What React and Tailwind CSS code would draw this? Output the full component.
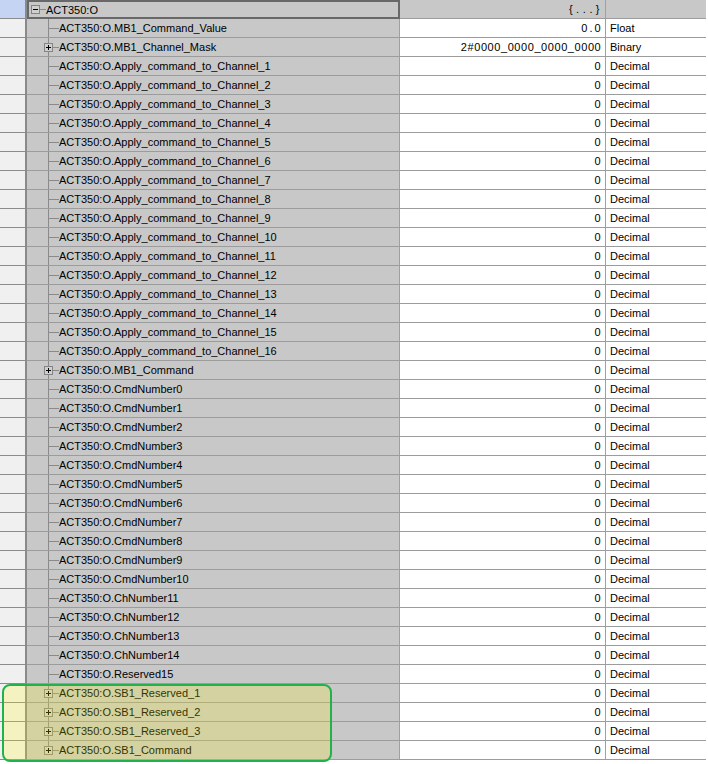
import React from "react";

const base = "ACT350:O.";

const rows = [
  { name: "MB1_Command_Value", value: "0.0", type: "Float" },
  { name: "MB1_Channel_Mask", value: "2#0000_0000_0000_0000", type: "Binary", plus: true },
  ...Array.from({ length: 16 }, (_, i) => ({ name: `Apply_command_to_Channel_${i + 1}` })),
  { name: "MB1_Command", plus: true },
  ...Array.from({ length: 11 }, (_, i) => ({ name: `CmdNumber${i}` })),
  ...Array.from({ length: 4 }, (_, i) => ({ name: `ChNumber${i + 11}` })),
  { name: "Reserved15" },
  { name: "SB1_Reserved_1", plus: true },
  { name: "SB1_Reserved_2", plus: true },
  { name: "SB1_Reserved_3", plus: true },
  { name: "SB1_Command", plus: true },
];

const sans = { fontFamily: '"Liberation Sans", Arial, sans-serif' };

function TreeBox({ minus }) {
  return (
    <div className="relative w-[9px] h-[9px] border border-[#848484] bg-[#cfcfcf] shrink-0">
      <div className="absolute left-[1px] top-[3px] w-[5px] h-px bg-black" />
      {!minus && <div className="absolute left-[3px] top-[1px] w-px h-[5px] bg-black" />}
    </div>
  );
}

// fixed-pitch value text, sans glyphs
function Value({ text }) {
  return (
    <div className="flex" style={sans}>
      {text.split("").map((c, i) => (
        <span key={i} className="w-[6.7px] text-center">
          {c}
        </span>
      ))}
    </div>
  );
}

function Row({ row, last }) {
  return (
    <div className="flex h-[19px]">
      <div className="w-[27px] shrink-0 bg-[#f0f0f0] border-r-2 border-b border-r-[#8a8a8a] border-b-[#8c8c8c]" />
      <div className="w-[373px] shrink-0 bg-[#c8c8c8] border-b border-[#9c9c9c] border-r border-r-[#a0a0a0] flex pl-[21px]">
        <div className="relative w-[11px] shrink-0 flex flex-col">
          <div className="h-[10px] border-l border-b border-[#8a8a8a]" />
          <div className={`flex-1 ${last ? "" : "border-l border-[#8a8a8a]"}`} />
          {row.plus && (
            <div className="absolute left-[-4px] top-[5px]">
              <TreeBox />
            </div>
          )}
        </div>
        <div
          className="flex items-center pt-px text-[11px] text-black whitespace-nowrap"
          style={sans}
        >
          {base + row.name}
        </div>
      </div>
      <div className="w-[206px] shrink-0 bg-white border-b border-[#9c9c9c] border-r border-r-[#a0a0a0] flex items-center justify-end pr-[4px] pt-px text-[11px] text-black">
        <Value text={row.value || "0"} />
      </div>
      <div
        className="w-[100px] shrink-0 bg-white border-b border-[#9c9c9c] flex items-center pl-[4px] pt-px text-[11px] text-black"
        style={sans}
      >
        {row.type || "Decimal"}
      </div>
    </div>
  );
}

export default function App() {
  return (
    <div className="relative w-[708px] h-[764px] bg-white overflow-hidden">
      <div className="flex flex-col w-[706px]">
        {/* root row */}
        <div className="flex h-[19px]">
          <div className="w-[27px] shrink-0 bg-[#c4d4f2] border-r-2 border-b border-r-[#8a8a8a] border-b-[#8c8c8c]" />
          <div className="w-[373px] shrink-0 bg-[#c8c8c8] border-2 border-[#686868] flex items-center pl-[2px] gap-0">
            <TreeBox minus />
            <div className="w-[6px] h-px bg-[#8a8a8a]" />
            <div className="pt-px text-[11px] text-black whitespace-nowrap" style={sans}>
              ACT350:O
            </div>
          </div>
          <div className="w-[206px] shrink-0 bg-[#c8c8c8] border-b border-[#9c9c9c] border-r border-r-[#a0a0a0] flex items-center justify-end pr-[4px] pt-px text-[11px] text-black">
            <Value text="{...}" />
          </div>
          <div className="w-[100px] shrink-0 bg-[#c8c8c8] border-b border-[#9c9c9c]" />
        </div>
        {rows.map((row, i) => (
          <Row key={row.name} row={row} last={i === rows.length - 1} />
        ))}
      </div>

      {/* highlight */}
      <div className="absolute left-[2px] top-[684px] w-[330px] h-[78px] rounded-[8px] border-2 border-[#22b14f] bg-[rgba(255,250,0,0.2)] pointer-events-none" />
    </div>
  );
}
